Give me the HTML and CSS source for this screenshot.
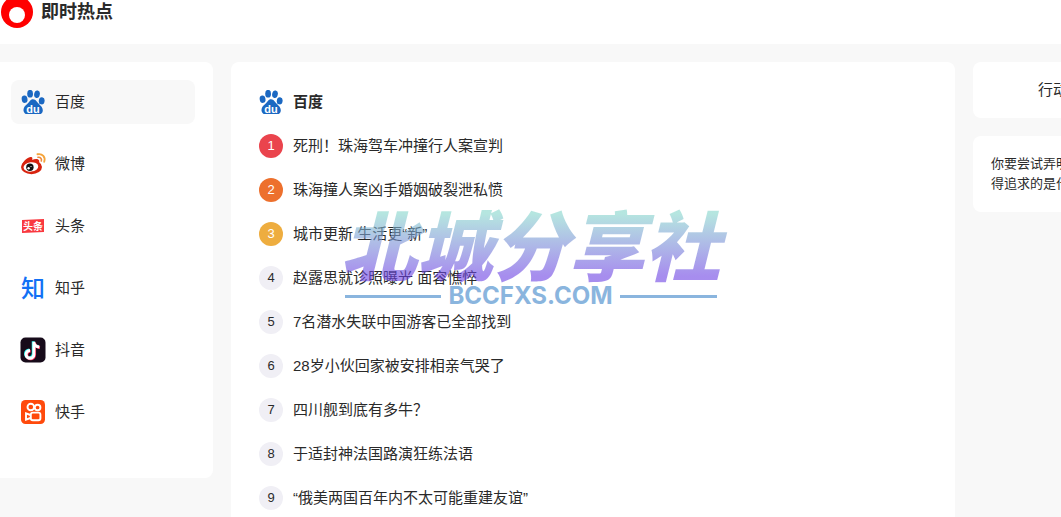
FILE: index.html
```html
<!DOCTYPE html>
<html lang="zh-CN">
<head>
    <meta charset="UTF-8">
    <meta name="viewport" content="width=device-width, initial-scale=1.0">
    <title>即时热点</title>
    <link rel="stylesheet" href="styles.css">
</head>
<body>
    <!-- shared logo, used in the menu and in the list title -->
    <svg width="0" height="0" class="defs" aria-hidden="true">
        <symbol id="baidu" viewBox="0 0 24 24">
            <g fill="#1b68c2">
                <ellipse cx="3.600" cy="9.200" rx="2.900" ry="3.700" transform="rotate(-10 3.600 9.200)"/>
                <ellipse cx="9.100" cy="3.700" rx="2.900" ry="3.900"/>
                <ellipse cx="16" cy="4.200" rx="2.800" ry="3.800" transform="rotate(12 16 4.200)"/>
                <ellipse cx="20.700" cy="10.800" rx="2.900" ry="3.600" transform="rotate(8 20.700 10.800)"/>
                <path d="M12 9.200C9.200 9.200 8.400 12 6.200 14C4 15.900 2 17.800 2.600 21.100C3.300 24.200 6.200 25 9.500 24.400H15C18.500 25 21 24.200 21.700 21.300C22.300 18.200 20.200 16.300 18 14.100C15.900 12.100 15 9.200 12 9.200Z"/>
            </g>
            <text x="12" y="22.500" text-anchor="middle" font-size="11" font-weight="bold" font-family="Liberation Sans, sans-serif" fill="#fff">du</text>
        </symbol>
    </svg>

    <header class="header">
        <a href="#" class="brand">
            <svg class="brand-logo" viewBox="0 0 32 32">
                <circle cx="16" cy="16" r="16" fill="#f00"/>
                <circle cx="16" cy="19" r="8" fill="#fff"/>
            </svg>
            <span>即时热点</span>
        </a>
    </header>

    <main class="layout">
        <nav class="card menu">
            <a href="#" class="menu-item active">
                <svg class="icon"><use href="#baidu"/></svg>
                <span>百度</span>
            </a>
            <a href="#" class="menu-item">
                <svg class="icon" viewBox="0 0 24 24">
                    <ellipse cx="10.500" cy="15" rx="10.500" ry="7.200" fill="#d8230f"/>
                    <path d="M0.500 13.500C2.500 8.300 8.500 3.800 10.800 5.300C11.800 6 11.300 7.300 11.100 8C13.800 6.800 17 6.600 18 8.300C18.500 9.500 18 10.500 17.800 11.500Z" fill="#d8230f"/>
                    <ellipse cx="9.900" cy="14.900" rx="7.400" ry="4.700" transform="rotate(-6 9.900 14.900)" fill="#fff"/>
                    <circle cx="8.900" cy="15.300" r="3.700" fill="#111"/>
                    <circle cx="7.600" cy="16.300" r="1.200" fill="#fff"/>
                    <circle cx="10" cy="14.500" r="0.600" fill="#fff"/>
                    <path d="M16.500 2.300C21.500 1.300 24.800 5.300 23.200 9.800" fill="none" stroke="#f5a43a" stroke-width="1.900" stroke-linecap="round"/>
                    <path d="M17 5.300C19.500 4.900 21 6.800 20.300 8.900" fill="none" stroke="#ee8a3c" stroke-width="1.600" stroke-linecap="round"/>
                </svg>
                <span>微博</span>
            </a>
            <a href="#" class="menu-item">
                <svg class="icon" viewBox="0 0 24 24">
                    <path d="M1 6L23 5V18L1 19Z" fill="#f9383f"/>
                    <text x="12" y="15.700" text-anchor="middle" font-size="10" font-weight="bold" font-family="Noto Sans CJK SC, sans-serif" fill="#fff">头条</text>
                </svg>
                <span>头条</span>
            </a>
            <a href="#" class="menu-item">
                <svg class="icon" viewBox="0 0 24 24">
                    <text x="12" y="21" text-anchor="middle" font-size="24" font-weight="500" font-family="Noto Sans CJK SC, sans-serif" fill="#1271f5">知</text>
                </svg>
                <span>知乎</span>
            </a>
            <a href="#" class="menu-item">
                <svg class="icon" viewBox="0 0 24 24">
                    <rect x="-0.500" y="-0.500" width="25" height="25" rx="5" fill="#170b1a"/>
                    <g fill="none" stroke-width="2.900">
                        <path d="M12.200 3.200V15.800A3.900 3.900 0 1 1 8.300 11.900M12.200 4C12.800 6.800 14.800 8.300 17.600 8.500" stroke="#25f4ee"/>
                        <path d="M13.600 4.400V17A3.900 3.900 0 1 1 9.700 13.100M13.600 5C14.200 7.800 16.200 9.300 19 9.500" stroke="#fe2c55"/>
                        <path d="M12.900 3.800V16.400A3.900 3.900 0 1 1 9 12.500M12.900 4.500C13.500 7.300 15.500 8.800 18.300 9" stroke="#fff"/>
                    </g>
                </svg>
                <span>抖音</span>
            </a>
            <a href="#" class="menu-item">
                <svg class="icon" viewBox="0 0 24 24">
                    <rect width="24" height="24" rx="4.500" fill="#ff4a0c"/>
                    <g fill="none" stroke="#fff" stroke-width="1.900">
                        <circle cx="9.800" cy="7" r="3.300"/>
                        <circle cx="16.600" cy="7.500" r="2.800"/>
                        <rect x="9.800" y="12.600" width="9.600" height="7.600" rx="2"/>
                        <path d="M9.500 15L5 13.300V19.700L9.500 18"/>
                    </g>
                </svg>
                <span>快手</span>
            </a>
        </nav>

        <section class="card hot">
            <h2 class="hot-title">
                <svg class="icon"><use href="#baidu"/></svg>
                <span>百度</span>
            </h2>
            <ol class="hot-list">
                <li><span class="rank rank-1">1</span><a href="#">死刑！珠海驾车冲撞行人案宣判</a></li>
                <li><span class="rank rank-2">2</span><a href="#">珠海撞人案凶手婚姻破裂泄私愤</a></li>
                <li><span class="rank rank-3">3</span><a href="#">城市更新 生活更“新”</a></li>
                <li><span class="rank">4</span><a href="#">赵露思就诊照曝光 面容憔悴</a></li>
                <li><span class="rank">5</span><a href="#">7名潜水失联中国游客已全部找到</a></li>
                <li><span class="rank">6</span><a href="#">28岁小伙回家被安排相亲气哭了</a></li>
                <li><span class="rank">7</span><a href="#">四川舰到底有多牛？</a></li>
                <li><span class="rank">8</span><a href="#">于适封神法国路演狂练法语</a></li>
                <li><span class="rank">9</span><a href="#">“俄美两国百年内不太可能重建友谊”</a></li>
            </ol>
        </section>

        <aside class="side">
            <div class="card side-title">行动</div>
            <div class="card side-text">你要尝试弄明<br>得追求的是什</div>
        </aside>
    </main>

    <div class="watermark">
        <div class="watermark-name">北城分享社</div>
        <div class="watermark-site">BCCFXS.COM</div>
    </div>
</body>
</html>
```
FILE: styles.css
```css
* {
    box-sizing: border-box;
}
body {
    margin: 0;
    background-color: #f8f8f8;
    color: #2a2a2a;
    font-family: "Liberation Sans", "Noto Sans CJK SC", sans-serif;
    font-size: 15px;
    line-height: 20px;
    position: relative;
    overflow: hidden;
}
a {
    color: inherit;
    text-decoration: none;
}
.defs {
    position: absolute;
}
.header {
    height: 44px;
    background-color: #fff;
}
.brand {
    display: flex;
    align-items: center;
    gap: 8px;
    height: 24px;
    padding-left: 1px;
    font-size: 18px;
    line-height: 24px;
    font-weight: bold;
}
.brand-logo {
    width: 32px;
    height: 32px;
}
.layout {
    display: grid;
    grid-template-columns: 213px minmax(0, 1fr) 88px;
    gap: 18px;
    align-items: start;
    padding-top: 18px;
}
.card {
    background-color: #fff;
    border-radius: 8px;
}
.icon {
    flex: none;
    width: 24px;
    height: 24px;
    overflow: visible;
}

/* left menu */
.menu {
    display: flex;
    flex-direction: column;
    gap: 18px;
    padding: 18px 18px 44px 11px;
    border-radius: 0 8px 8px 0;
}
.menu-item {
    display: flex;
    align-items: center;
    gap: 10px;
    height: 44px;
    padding: 0 10px;
    border-radius: 8px;
}
.menu-item.active {
    background-color: #f8f8f8;
}

/* hot list */
.hot {
    padding: 18px 28px;
}
.hot-title,
.hot-list li {
    display: flex;
    align-items: center;
    gap: 10px;
    height: 44px;
}
.hot-title {
    margin: 0;
    font-size: 15px;
}
.hot-list {
    margin: 0;
    padding: 0;
    list-style: none;
}
.rank {
    width: 24px;
    height: 24px;
    border-radius: 50%;
    background-color: #f0eff5;
    font-size: 13px;
    line-height: 24px;
    text-align: center;
}
.rank-1,
.rank-2,
.rank-3 {
    color: #fff;
}
.rank-1 {
    background-color: #ea444d;
}
.rank-2 {
    background-color: #ed702d;
}
.rank-3 {
    background-color: #eead3f;
}

/* right column, runs past the window edge */
.side {
    display: grid;
    gap: 18px;
    width: 160px;
}
.side .card {
    padding: 18px;
}
.side-title {
    text-align: center;
}
.side-text {
    font-size: 13px;
    white-space: nowrap;
}

/* watermark over the page */
.watermark {
    position: absolute;
    top: 204px;
    left: 50%;
    transform: translateX(-50%);
    pointer-events: none;
    white-space: nowrap;
}
.watermark-name {
    padding: 0 12px 4px;
    font-family: "Noto Sans CJK SC", sans-serif;
    font-size: 76px;
    font-style: italic;
    font-weight: 900;
    line-height: 76px;
    color: transparent;
    background: linear-gradient(rgba(132, 213, 203, 0.6) 12%, rgba(108, 65, 227, 0.6) 90%);
    -webkit-background-clip: text;
    background-clip: text;
}
.watermark-site {
    display: flex;
    align-items: center;
    gap: 7px;
    padding: 0 16px;
    color: #8ab5de;
    font-family: Inter, "Liberation Sans", sans-serif;
    font-size: 24px;
    font-weight: bold;
    line-height: 24px;
}
.watermark-site::before,
.watermark-site::after {
    content: "";
    flex: 1;
    height: 3px;
    background-color: #8ab5de;
}
```
